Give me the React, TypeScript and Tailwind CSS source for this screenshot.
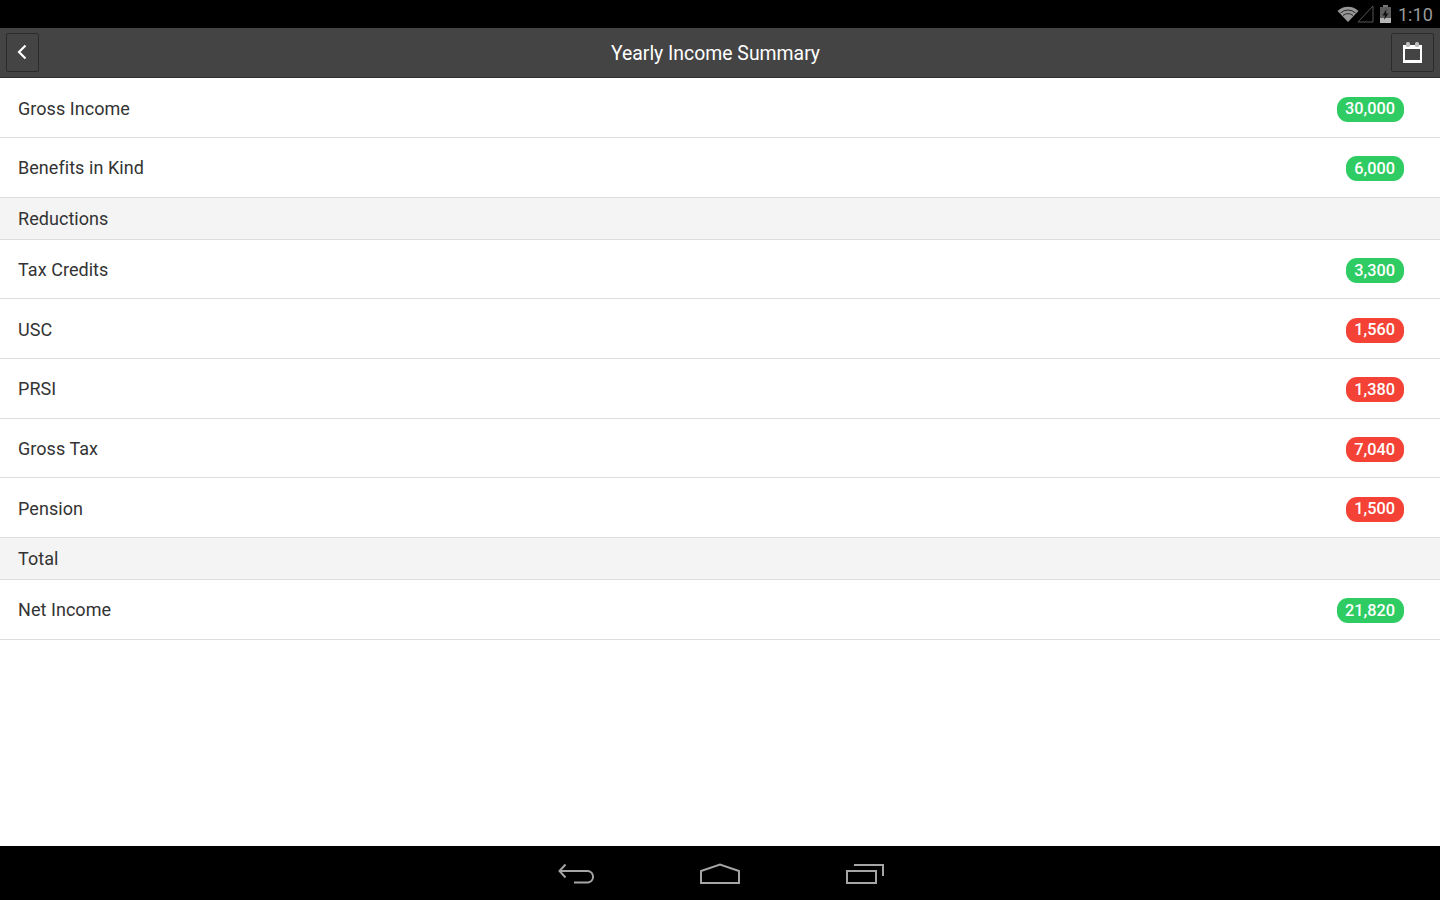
import React from 'react'

type Row = { label: string; value?: string; tone?: 'green' | 'red' }

const rows: Row[] = [
  { label: 'Gross Income', value: '30,000', tone: 'green' },
  { label: 'Benefits in Kind', value: '6,000', tone: 'green' },
  { label: 'Reductions' },
  { label: 'Tax Credits', value: '3,300', tone: 'green' },
  { label: 'USC', value: '1,560', tone: 'red' },
  { label: 'PRSI', value: '1,380', tone: 'red' },
  { label: 'Gross Tax', value: '7,040', tone: 'red' },
  { label: 'Pension', value: '1,500', tone: 'red' },
  { label: 'Total' },
  { label: 'Net Income', value: '21,820', tone: 'green' },
]

function StatusBar() {
  return (
    <div className="h-[28px] bg-black flex items-center justify-end pr-[7px] shrink-0">
      <svg width="22" height="18" viewBox="0 0 22 18" className="mr-[-2px]">
        <path d="M0.5 6 A15 15 0 0 1 21.5 6 L11 17 Z" fill="#969696" />
        <path d="M3.5 8 A11 11 0 0 1 18.5 8" fill="none" stroke="#2a2a2a" strokeWidth="1" />
        <path d="M6 10.5 A7.5 7.5 0 0 1 16 10.5" fill="none" stroke="#2a2a2a" strokeWidth="1" />
      </svg>
      <svg width="17" height="18" viewBox="0 0 17 18" className="mr-[5px]">
        <path d="M16 1 V17 H1 Z" fill="none" stroke="#555" strokeWidth="1" />
      </svg>
      <svg width="13" height="18" viewBox="0 0 13 18" className="mr-[6px]">
        <rect x="4" y="0" width="5" height="2" fill="#777" />
        <rect x="1" y="2" width="11" height="16" fill="#5c5c5c" />
        <rect x="1" y="13" width="11" height="5" fill="#b5b5b5" />
        <path d="M7.5 4 L3.5 10.5 H6 L5 15 L9.5 8.5 H7 Z" fill="#111" />
      </svg>
      <span className="text-[18px] leading-none mt-[2px] text-[#9a9a9a] tracking-[0.1px]">1:10</span>
    </div>
  )
}

function Header() {
  return (
    <div className="h-[50px] bg-[#444444] border-b border-b-[#2f2f2f] flex items-center justify-between px-[6px] shrink-0">
      <button className="w-[33px] h-[39px] border border-[#2b2b2b] rounded-[2px] flex items-center justify-center">
        <svg width="12" height="16" viewBox="0 0 12 16" className="mb-[2px] mr-[1px]">
          <path d="M9.5 1.5 L3 8 L9.5 14.5" fill="none" stroke="#ffffff" strokeWidth="2.2" />
        </svg>
      </button>
      <h1 className="text-[19.4px] text-white font-normal ml-[1px] mt-[3px]">Yearly Income Summary</h1>
      <button className="w-[43px] h-[39px] border border-[#2b2b2b] rounded-[2px] flex items-center justify-center">
        <svg width="21" height="21" viewBox="0 0 21 21">
          <path d="M1 3 H20 V21 H1 Z" fill="#ffffff" />
          <rect x="3" y="7" width="15" height="11" fill="#444444" />
          <rect x="4" y="0" width="4" height="5" rx="1.5" fill="#bdbdbd" />
          <rect x="13" y="0" width="4" height="5" rx="1.5" fill="#bdbdbd" />
        </svg>
      </button>
    </div>
  )
}

function NavBar() {
  return (
    <div className="h-[54px] bg-black flex items-start justify-center shrink-0 pt-[17px] pl-[2px]">
      <svg width="38" height="22" viewBox="0 0 38 22" className="mr-[104px]">
        <path d="M8.5 1.5 L2.5 8 L8.5 14.5 M2.5 8 H31 A5.8 5.8 0 0 1 31 19.5 H17" fill="none" stroke="#a5a5a5" strokeWidth="2" />
      </svg>
      <svg width="42" height="22" viewBox="0 0 42 22" className="mr-[104px]">
        <path d="M2 20 V8 L21 1.5 L40 8 V20 Z" fill="none" stroke="#a5a5a5" strokeWidth="2" />
      </svg>
      <svg width="40" height="22" viewBox="0 0 40 22">
        <path d="M9 2 H38 V13" fill="none" stroke="#a5a5a5" strokeWidth="2" />
        <rect x="2" y="8" width="29" height="12" fill="none" stroke="#a5a5a5" strokeWidth="2" />
      </svg>
    </div>
  )
}

export default function App() {
  return (
    <div className="w-[1440px] h-[900px] flex flex-col bg-white overflow-hidden font-['Roboto',sans-serif]">
      <StatusBar />
      <Header />
      <div className="flex-1 pt-[0.4px]">
        {rows.map(row =>
          row.value ? (
            <div key={row.label} className="h-[59.65px] border-b border-b-[#dddddd] flex items-center justify-between pl-[18px] pr-[36px]">
              <span className="text-[18px] text-[#333333] tracking-[0.05px] mt-[1px]">{row.label}</span>
              <span
                className={`h-[25px] mt-[3px] pt-[1px] pl-[8px] pr-[9px] rounded-[11px] flex items-center text-[16.3px] font-medium text-white ${
                  row.tone === 'green' ? 'bg-[#2ecc63]' : 'bg-[#f44336]'
                }`}
              >
                {row.value}
              </span>
            </div>
          ) : (
            <div key={row.label} className="h-[42px] bg-[#f4f4f4] border-b border-b-[#dddddd] flex items-center pl-[18px]">
              <span className="text-[18px] text-[#333333] tracking-[0.05px]">{row.label}</span>
            </div>
          )
        )}
      </div>
      <NavBar />
    </div>
  )
}
